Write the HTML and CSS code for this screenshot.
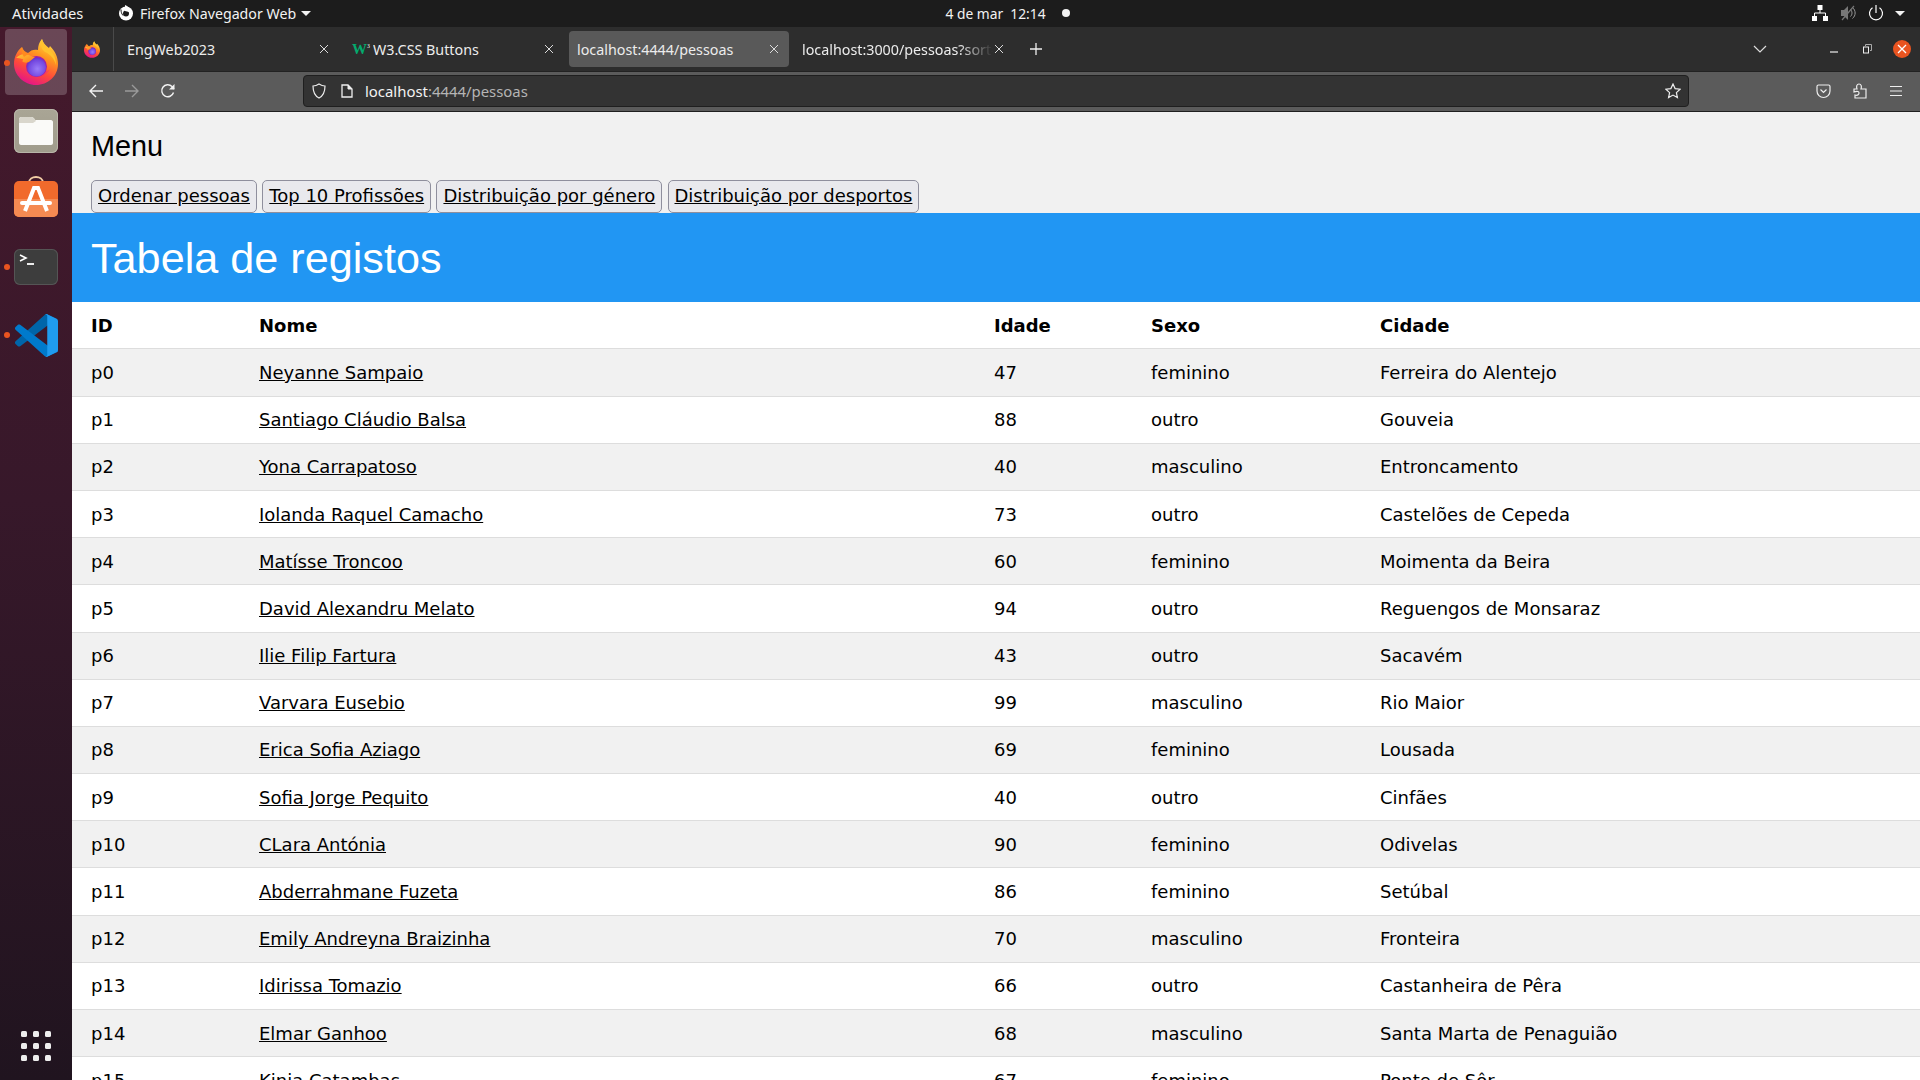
FILE: index.html
```html
<!DOCTYPE html>
<html lang="pt">
<head>
<meta charset="utf-8">
<title>localhost:4444/pessoas</title>
<link rel="stylesheet" href="styles.css">
</head>
<body>
<svg class="defs" width="0" height="0" aria-hidden="true">
  <defs>
    <linearGradient id="fxBody" x1="0.8" y1="0" x2="0.35" y2="1">
      <stop offset="0" stop-color="#ffe14a"/>
      <stop offset="0.35" stop-color="#ff9a1f"/>
      <stop offset="0.68" stop-color="#ff4a3a"/>
      <stop offset="1" stop-color="#e3148a"/>
    </linearGradient>
    <radialGradient id="fxBall" cx="0.55" cy="0.6" r="0.65">
      <stop offset="0" stop-color="#9a7cf8"/>
      <stop offset="0.7" stop-color="#7448e0"/>
      <stop offset="1" stop-color="#5a2cbc"/>
    </radialGradient>
    <linearGradient id="fxTail" x1="0" y1="0" x2="1" y2="1">
      <stop offset="0" stop-color="#ffc83a"/>
      <stop offset="1" stop-color="#ff7a1a"/>
    </linearGradient>
    <symbol id="firefox" viewBox="0 0 44 46">
      <path fill="url(#fxBody)" d="M8 8C9 11 11 13 14 14C17 11 20 10 24 11C24 7 25 3 28 0C29 4 32 7 35 9L36 7C41 12 44 18 44 25C44 37 34 46 22 46C10 46 0 36 0 25C0 18 3 12 8 8Z"/>
      <path fill="#ffc22e" d="M28 0C29 5 33 8 36 11C40 15 42 20 42 26C40 19 36 15 31 13C27 10 26 5 28 0Z"/>
      <path fill="#f0366e" d="M10 30C14 40 30 41 36 30C32 35 16 36 10 30Z" opacity=".75"/>
      <circle cx="22.500" cy="27.500" r="10.500" fill="#a020a8"/>
      <circle cx="22.500" cy="28" r="9.500" fill="url(#fxBall)"/>
      <path fill="url(#fxTail)" d="M2 19C6 15 11 14 15 16C17 17 19 18 21 18C19 20 17 21 15 23C13 24 10 24 8 22C10 21 9 20 8 20C6 19 4 19 2 19Z"/>
      <path fill="#ff8a1f" d="M8 8C9 12 11 14 15 15C13 16 11 17 10 18C8 15 7 12 8 8Z"/>
    </symbol>
    <symbol id="close" viewBox="0 0 12 12">
      <path d="M2 2L10 10M10 2L2 10" stroke="currentColor" fill="none"/>
    </symbol>
  </defs>
</svg>

<header class="topbar">
  <div class="top-left">
    <span class="activities">Atividades</span>
    <svg class="app-glyph" width="16" height="16" viewBox="0 0 16 16">
      <circle cx="8" cy="8.5" r="7" fill="#fff"/>
      <circle cx="8" cy="8.5" r="3" fill="#1c1c1c"/>
      <path d="M7 0C10 1 12 4 11 7L7 6Z" fill="#fff"/>
      <path d="M3 4.500C3 7 3.500 8.500 5 10.500" stroke="#1c1c1c" fill="none"/>
    </svg>
    <span class="app-name">Firefox Navegador Web</span>
    <span class="caret"></span>
  </div>
  <div class="clock">
    <span>4 de mar&nbsp; 12:14</span>
    <span class="rec-dot"></span>
  </div>
  <div class="tray">
    <svg class="tray-net" width="16" height="16" viewBox="0 0 16 16"><path d="M5.5 0h5v5h-5zM0 11h5v5H0zM11 11h5v5h-5z" fill="#fff"/><path d="M8 5v3M2.5 11V8h11v3" stroke="#fff" fill="none"/></svg>
    <svg width="16" height="16" viewBox="0 0 16 16"><path d="M0 5h3l4-4v14l-4-4H0z" fill="#777"/><path d="M9.5 4.500c2 2 2 5 0 7M11.500 2.500c3.500 3 3.500 8 0 11" stroke="#999" fill="none"/><path d="M1 15L13 1" stroke="#777" stroke-width="1.2"/></svg>
    <svg width="16" height="18" viewBox="0 0 16 18"><path d="M8 1v8" stroke="#fff" stroke-width="1.2"/><path d="M4.500 3.800a6.500 6.500 0 1 0 7 0" stroke="#fff" stroke-width="1.2" fill="none"/></svg>
    <span class="caret"></span>
  </div>
</header>

<div class="desktop">
  <nav class="dock">
    <div class="dock-slot active">
      <span class="run-dot"></span>
      <svg width="44" height="46"><use href="#firefox"/></svg>
    </div>
    <div class="dock-slot">
      <div class="tile tile-files">
        <svg width="34" height="28" viewBox="0 0 34 28"><path d="M2 0h10c2 0 3 1 4 3h16c1 0 2 1 2 2v21c0 1-1 2-2 2H2c-1 0-2-1-2-2V2C0 1 1 0 2 0Z" fill="#fafaf8"/><path d="M0 6V2C0 1 1 0 2 0h10c2 0 3 1 5 4l-3 2Z" fill="#d9d6cc"/></svg>
      </div>
    </div>
    <div class="dock-slot">
      <svg class="store-icon" width="44" height="42" viewBox="0 0 44 42">
        <path d="M15 8C15 0 29 0 29 8" fill="none" stroke="#f2cda5" stroke-width="2"/>
        <rect y="6" width="44" height="36" rx="5" fill="#f16a2c"/>
        <path d="M0 24h44v13a5 5 0 0 1-5 5H5a5 5 0 0 1-5-5Z" fill="#f58a52"/>
        <path d="M11 36L20 13h4l9 23" fill="none" stroke="#fff" stroke-width="4"/>
        <path d="M8 28h28" stroke="#fff" stroke-width="4" stroke-linecap="round"/>
      </svg>
    </div>
    <div class="dock-slot">
      <span class="run-dot"></span>
      <div class="tile tile-term">
        <svg width="44" height="36" viewBox="0 0 44 36"><path d="M6 6L12 9L6 12" fill="none" stroke="#fff" stroke-width="1.6"/><path d="M13 15h7" stroke="#fff" stroke-width="1.8"/></svg>
      </div>
    </div>
    <div class="dock-slot">
      <span class="run-dot"></span>
      <svg width="43" height="43" viewBox="0 0 100 100">
        <path fill="#0065A9" d="M96.4614 10.7962L75.8569 0.875542C73.4719 -0.272773 70.6217 0.211611 68.75 2.08333L1.29858 63.5832C-0.515693 65.2373 -0.513607 68.0937 1.30308 69.7452L6.81272 74.754C8.29793 76.1042 10.5347 76.2036 12.1338 74.9905L93.3609 13.3699C96.086 11.3026 100 13.2462 100 16.6667V16.4275C100 14.0265 98.6246 11.8378 96.4614 10.7962Z"/>
        <path fill="#007ACC" d="M96.4614 89.2038L75.8569 99.1245C73.4719 100.273 70.6217 99.7884 68.75 97.9167L1.29858 36.4169C-0.515693 34.7627 -0.513607 31.9063 1.30308 30.2548L6.81272 25.246C8.29793 23.8958 10.5347 23.7964 12.1338 25.0095L93.3609 86.6301C96.086 88.6974 100 86.7538 100 83.3334V83.5726C100 85.9735 98.6246 88.1622 96.4614 89.2038Z"/>
        <path fill="#1F9CF0" d="M75.8578 99.1263C73.4721 100.274 70.6219 99.7885 68.75 97.9166C71.0564 100.223 75 98.5895 75 95.3278V4.67213C75 1.41039 71.0564 -0.223106 68.75 2.08329C70.6219 0.211402 73.4721 -0.273666 75.8578 0.873633L96.4587 10.7807C98.6234 11.8217 100 14.0112 100 16.4132V83.5871C100 85.9891 98.6234 88.1786 96.4586 89.2196L75.8578 99.1263Z"/>
      </svg>
    </div>
    <div class="app-grid">
      <i></i><i></i><i></i><i></i><i></i><i></i><i></i><i></i><i></i>
    </div>
  </nav>

  <main class="browser">
    <div class="tabbar">
      <div class="fx-view"><svg width="16" height="17"><use href="#firefox"/></svg></div>
      <div class="tab">
        <span class="tab-title">EngWeb2023</span>
        <svg class="tab-close" width="12" height="12"><use href="#close"/></svg>
      </div>
      <div class="tab">
        <span class="w3-logo">W<sup>3</sup></span>
        <span class="tab-title">W3.CSS Buttons</span>
        <svg class="tab-close" width="12" height="12"><use href="#close"/></svg>
      </div>
      <div class="tab tab-active">
        <span class="tab-title">localhost:4444/pessoas</span>
        <svg class="tab-close" width="12" height="12"><use href="#close"/></svg>
      </div>
      <div class="tab">
        <span class="tab-title tab-fade">localhost:3000/pessoas?sort=nome</span>
        <svg class="tab-close" width="12" height="12"><use href="#close"/></svg>
      </div>
      <svg class="new-tab" width="14" height="14" viewBox="0 0 14 14"><path d="M7 1v12M1 7h12" stroke="#eee" stroke-width="1.3"/></svg>
      <div class="win-controls">
        <svg class="tab-list" width="14" height="10" viewBox="0 0 14 10"><path d="M1 2l6 6 6-6" fill="none" stroke="#ddd" stroke-width="1.2"/></svg>
        <svg class="win-min" width="10" height="10" viewBox="0 0 10 10"><path d="M1 8h8" stroke="#eee" stroke-width="1.2"/></svg>
        <svg class="win-max" width="10" height="10" viewBox="0 0 10 10"><path d="M3.500 2V.5h6v6H8" stroke="#aaa" fill="none"/><rect x="1.5" y="3" width="5" height="6" stroke="#eee" fill="none"/></svg>
        <span class="win-close"><svg width="10" height="10" viewBox="0 0 10 10"><path d="M1 1l8 8M9 1l-8 8" stroke="#fff" stroke-width="1.3"/></svg></span>
      </div>
    </div>

    <div class="navbar">
      <svg width="16" height="16" viewBox="0 0 16 16"><path d="M15 8H2M8 2L2 8l6 6" fill="none" stroke="#f2f2f2" stroke-width="1.4"/></svg>
      <svg class="nav-fwd" width="16" height="16" viewBox="0 0 16 16"><path d="M1 8h13M8 2l6 6-6 6" fill="none" stroke="#9a9a9a" stroke-width="1.4"/></svg>
      <svg class="nav-reload" width="16" height="16" viewBox="0 0 16 16"><path d="M13.500 9.500A6 6 0 1 1 12 3.500L14 6" fill="none" stroke="#f2f2f2" stroke-width="1.4"/><path d="M14.500 1v5.500H9" fill="#f2f2f2"/></svg>
      <div class="urlbar">
        <svg width="14" height="16" viewBox="0 0 14 16"><path d="M7 1C5 2.300 3 3 1 3C1 9 3 13 7 15C11 13 13 9 13 3C11 3 9 2.300 7 1Z" fill="none" stroke="#eee" stroke-width="1.2"/></svg>
        <svg class="url-page" width="12" height="14" viewBox="0 0 12 14"><path d="M1 1h6l4 4v8H1Z" fill="none" stroke="#eee" stroke-width="1.3"/><path d="M7 1v4h4" fill="#eee" stroke="#eee"/></svg>
        <span class="url-text">localhost<span class="url-dim">:4444/pessoas</span></span>
        <svg width="16" height="16" viewBox="0 0 16 16"><path d="M8 1l2.100 4.600 5 .6-3.700 3.400 1 5L8 12.100 3.600 14.600l1-5L.9 6.200l5-.6Z" fill="none" stroke="#eee" stroke-width="1.200"/></svg>
      </div>
      <div class="nav-tools">
        <svg width="15" height="15" viewBox="0 0 15 15"><path d="M1 2.500C1 1.500 1.700 1 2.500 1h10c.8 0 1.500.5 1.500 1.500V7a6.500 6.500 0 0 1-13 0Z" fill="none" stroke="#eee" stroke-width="1.200"/><path d="M4.500 5.500l3 3 3-3" fill="none" stroke="#eee" stroke-width="1.200"/></svg>
        <svg width="15" height="16" viewBox="0 0 15 16"><path d="M1 6h3C3 3 4 1 6 1s3 2 2 5h5v9H2v-3c3 1 4-1 4-2S5 7.500 1 9Z" fill="none" stroke="#eee" stroke-width="1.200"/></svg>
        <svg width="14" height="12" viewBox="0 0 14 12"><path d="M1 1.500h12M1 6h12M1 10.500h12" stroke="#eee" stroke-width="1.200"/></svg>
      </div>
    </div>

    <div class="page">
      <section class="menu">
        <h3 class="menu-title">Menu</h3>
        <div class="menu-buttons">
          <a class="btn" href="#">Ordenar pessoas</a>
          <a class="btn" href="#">Top 10 Profissões</a>
          <a class="btn" href="#">Distribuição por género</a>
          <a class="btn" href="#">Distribuição por desportos</a>
        </div>
      </section>
      <header class="banner"><h1>Tabela de registos</h1></header>
      <table class="records">
        <colgroup>
          <col class="c-id"><col class="c-nome"><col class="c-idade"><col class="c-sexo"><col class="c-cidade">
        </colgroup>
        <thead>
          <tr><th>ID</th><th>Nome</th><th>Idade</th><th>Sexo</th><th>Cidade</th></tr>
        </thead>
        <tbody>
          <tr><td>p0</td><td><a href="#">Neyanne Sampaio</a></td><td>47</td><td>feminino</td><td>Ferreira do Alentejo</td></tr>
          <tr><td>p1</td><td><a href="#">Santiago Cláudio Balsa</a></td><td>88</td><td>outro</td><td>Gouveia</td></tr>
          <tr><td>p2</td><td><a href="#">Yona Carrapatoso</a></td><td>40</td><td>masculino</td><td>Entroncamento</td></tr>
          <tr><td>p3</td><td><a href="#">Iolanda Raquel Camacho</a></td><td>73</td><td>outro</td><td>Castelões de Cepeda</td></tr>
          <tr><td>p4</td><td><a href="#">Matísse Troncoo</a></td><td>60</td><td>feminino</td><td>Moimenta da Beira</td></tr>
          <tr><td>p5</td><td><a href="#">David Alexandru Melato</a></td><td>94</td><td>outro</td><td>Reguengos de Monsaraz</td></tr>
          <tr><td>p6</td><td><a href="#">Ilie Filip Fartura</a></td><td>43</td><td>outro</td><td>Sacavém</td></tr>
          <tr><td>p7</td><td><a href="#">Varvara Eusebio</a></td><td>99</td><td>masculino</td><td>Rio Maior</td></tr>
          <tr><td>p8</td><td><a href="#">Erica Sofia Aziago</a></td><td>69</td><td>feminino</td><td>Lousada</td></tr>
          <tr><td>p9</td><td><a href="#">Sofia Jorge Pequito</a></td><td>40</td><td>outro</td><td>Cinfães</td></tr>
          <tr><td>p10</td><td><a href="#">CLara Antónia</a></td><td>90</td><td>feminino</td><td>Odivelas</td></tr>
          <tr><td>p11</td><td><a href="#">Abderrahmane Fuzeta</a></td><td>86</td><td>feminino</td><td>Setúbal</td></tr>
          <tr><td>p12</td><td><a href="#">Emily Andreyna Braizinha</a></td><td>70</td><td>masculino</td><td>Fronteira</td></tr>
          <tr><td>p13</td><td><a href="#">Idirissa Tomazio</a></td><td>66</td><td>outro</td><td>Castanheira de Pêra</td></tr>
          <tr><td>p14</td><td><a href="#">Elmar Ganhoo</a></td><td>68</td><td>masculino</td><td>Santa Marta de Penaguião</td></tr>
          <tr><td>p15</td><td><a href="#">Kinia Catambas</a></td><td>67</td><td>feminino</td><td>Ponte de Sôr</td></tr>
        </tbody>
      </table>
    </div>
  </main>
</div>
</body>
</html>
```

FILE: styles.css
```css
* { box-sizing: border-box; }
html, body { margin: 0; height: 100%; overflow: hidden; }
body {
  display: flex;
  flex-direction: column;
  font-family: "Noto Sans", sans-serif;
  background: #2d2d2d;
}
.defs { position: absolute; }

/* top bar */
.topbar {
  height: 27px;
  flex: none;
  padding-bottom: 1px;
  background: #1c1c1c;
  color: #f2f2f2;
  font-size: 14.2px;
  display: grid;
  grid-template-columns: 1fr auto 1fr;
  align-items: center;
}
.top-left { display: flex; align-items: center; padding-left: 12px; }
.activities { width: 106px; font-size: 14.7px; }
.app-glyph { margin-right: 6px; }
.app-name { width: 161px; }
.caret {
  width: 0; height: 0;
  border-left: 5px solid transparent;
  border-right: 5px solid transparent;
  border-top: 5px solid #f2f2f2;
}
.clock { display: flex; align-items: center; gap: 16px; padding-left: 95px; font-size: 13.8px; }
.rec-dot { width: 8px; height: 8px; border-radius: 50%; background: #f2f2f2; }
.tray { display: flex; align-items: center; justify-content: flex-end; gap: 11px; padding-right: 15px; }
.tray-net { margin-right: 2px; }

/* desktop */
.desktop { flex: 1; display: flex; min-height: 0; }

/* dock */
.dock {
  width: 72px;
  flex: none;
  padding-top: 2px;
  background: linear-gradient(180deg, #45192c 0%, #37182a 45%, #20141f 100%);
  display: flex;
  flex-direction: column;
  align-items: center;
  gap: 2px;
}
.dock-slot {
  position: relative;
  width: 62px;
  height: 66px;
  padding-top: 2px;
  border-radius: 4px;
  display: flex;
  align-items: center;
  justify-content: center;
}
.dock-slot.active { padding-top: 0; background: rgba(255, 255, 255, 0.2); }
.store-icon { margin-top: -6px; }
.run-dot {
  position: absolute;
  left: -1px;
  top: 31px;
  width: 6px;
  height: 6px;
  border-radius: 50%;
  background: #e95420;
}
.tile {
  width: 44px;
  border-radius: 6px;
  display: flex;
  align-items: center;
  justify-content: center;
}
.tile-files {
  height: 44px;
  background: linear-gradient(180deg, #a9a595, #a09c8c);
  box-shadow: inset 0 0 0 1px #b8b5a8;
}
.tile-term {
  height: 36px;
  background: #3d3d3d;
  box-shadow: inset 0 0 0 1px #555;
}
.app-grid {
  margin-top: auto;
  margin-bottom: 19px;
  width: 30px;
  display: grid;
  grid-template-columns: repeat(3, 6px);
  grid-auto-rows: 6px;
  justify-content: space-between;
  row-gap: 6px;
}
.app-grid i { background: #eeeeee; border-radius: 1.5px; }

/* browser */
.browser { flex: 1; min-width: 0; display: flex; flex-direction: column; }
.tabbar {
  height: 44px;
  flex: none;
  display: flex;
  align-items: center;
  gap: 5px;
  background: #2d2d2d;
  color: #f0f0f0;
  font-size: 14.3px;
}
.fx-view {
  width: 42px;
  height: 44px;
  border-right: 1px solid #4a4a4a;
  display: flex;
  align-items: center;
  justify-content: center;
  padding-right: 2px;
}
.tab {
  width: 220px;
  height: 36px;
  padding: 0 9px 0 8px;
  border-radius: 4px;
  display: flex;
  align-items: center;
  color: #ececec;
}
.tab-active { background: #595959; }
.tab-title { flex: 1; min-width: 0; white-space: nowrap; overflow: hidden; }
.tab-fade { -webkit-mask-image: linear-gradient(90deg, #000 82%, transparent 100%); mask-image: linear-gradient(90deg, #000 82%, transparent 100%); }
.tab-close { flex: none; color: #dcdcdc; }
.w3-logo {
  width: 21px;
  font-family: "Liberation Serif", serif;
  font-weight: bold;
  font-size: 15px;
  color: #04aa6d;
}
.w3-logo sup { font-size: 6px; color: #ccc; }
.new-tab { margin-left: 10px; }
.win-controls { margin-left: auto; display: flex; align-items: center; height: 100%; padding-right: 9px; }
.tab-list { margin-right: 62px; }
.win-min { margin-right: 23px; }
.win-max { margin-right: 21px; }
.win-close {
  width: 18px; height: 18px;
  border-radius: 50%;
  background: #e95420;
  display: flex; align-items: center; justify-content: center;
}
.navbar {
  height: 41px;
  flex: none;
  background: #5b5b5b;
  border-bottom: 1px solid #1f1f1f;
  border-top: 1px solid #222;
  display: flex;
  align-items: center;
  padding: 0 0 1px 16px;
}
.nav-fwd { margin-left: 20px; }
.nav-reload { margin-left: 20px; margin-right: 127px; }
.urlbar {
  width: 1386px;
  height: 32px;
  background: #333333;
  border: 1px solid #1f1f1f;
  border-radius: 4px;
  display: flex;
  align-items: center;
  padding: 0 7px 0 8px;
  color: #f2f2f2;
  font-size: 14.9px;
}
.url-page { margin-left: 15px; }
.url-text { margin-left: 12px; flex: 1; }
.url-dim { color: #b5b5b5; }
.nav-tools { display: flex; align-items: center; gap: 21.5px; margin-left: 127px; }

/* page */
.page { flex: 1; min-height: 0; overflow: hidden; background: #fff; color: #000; }
.menu { background: #f1f1f1; padding-left: 19px; height: 101px; }
.menu-title {
  margin: 0;
  padding-top: 14px;
  height: 68px;
  font-family: "Liberation Sans", sans-serif;
  font-weight: 400;
  font-size: 28.8px;
  line-height: 40px;
}
.menu-buttons { display: flex; gap: 5.3px; }
.btn {
  height: 33px;
  padding: 0 6px 2px;
  display: flex;
  align-items: center;
  font-family: "DejaVu Sans", sans-serif;
  font-size: 18px;
  color: #000;
  background: #e9e9ed;
  border: 1px solid #8f8f9d;
  border-radius: 5px;
}
.banner {
  height: 89.2px;
  background: #2196f3;
  color: #fff;
  padding: 2px 0 0 19px;
  display: flex;
  align-items: center;
}
.banner h1 {
  margin: 0;
  font-family: "Liberation Sans", sans-serif;
  font-weight: 400;
  font-size: 43.2px;
}
.records {
  width: 100%;
  table-layout: fixed;
  border-collapse: collapse;
  font-family: "DejaVu Sans", sans-serif;
  font-size: 18px;
  line-height: 27px;
}
.c-id { width: 168px; }
.c-nome { width: 735px; }
.c-idade { width: 157px; }
.c-sexo { width: 229px; }
.records th, .records td { padding: 9.6px 19px; text-align: left; }
.records tr { border-bottom: 1px solid #dddddd; }
.records tbody tr:nth-child(odd) { background: #f1f1f1; }
.records a { color: #000; }
```
